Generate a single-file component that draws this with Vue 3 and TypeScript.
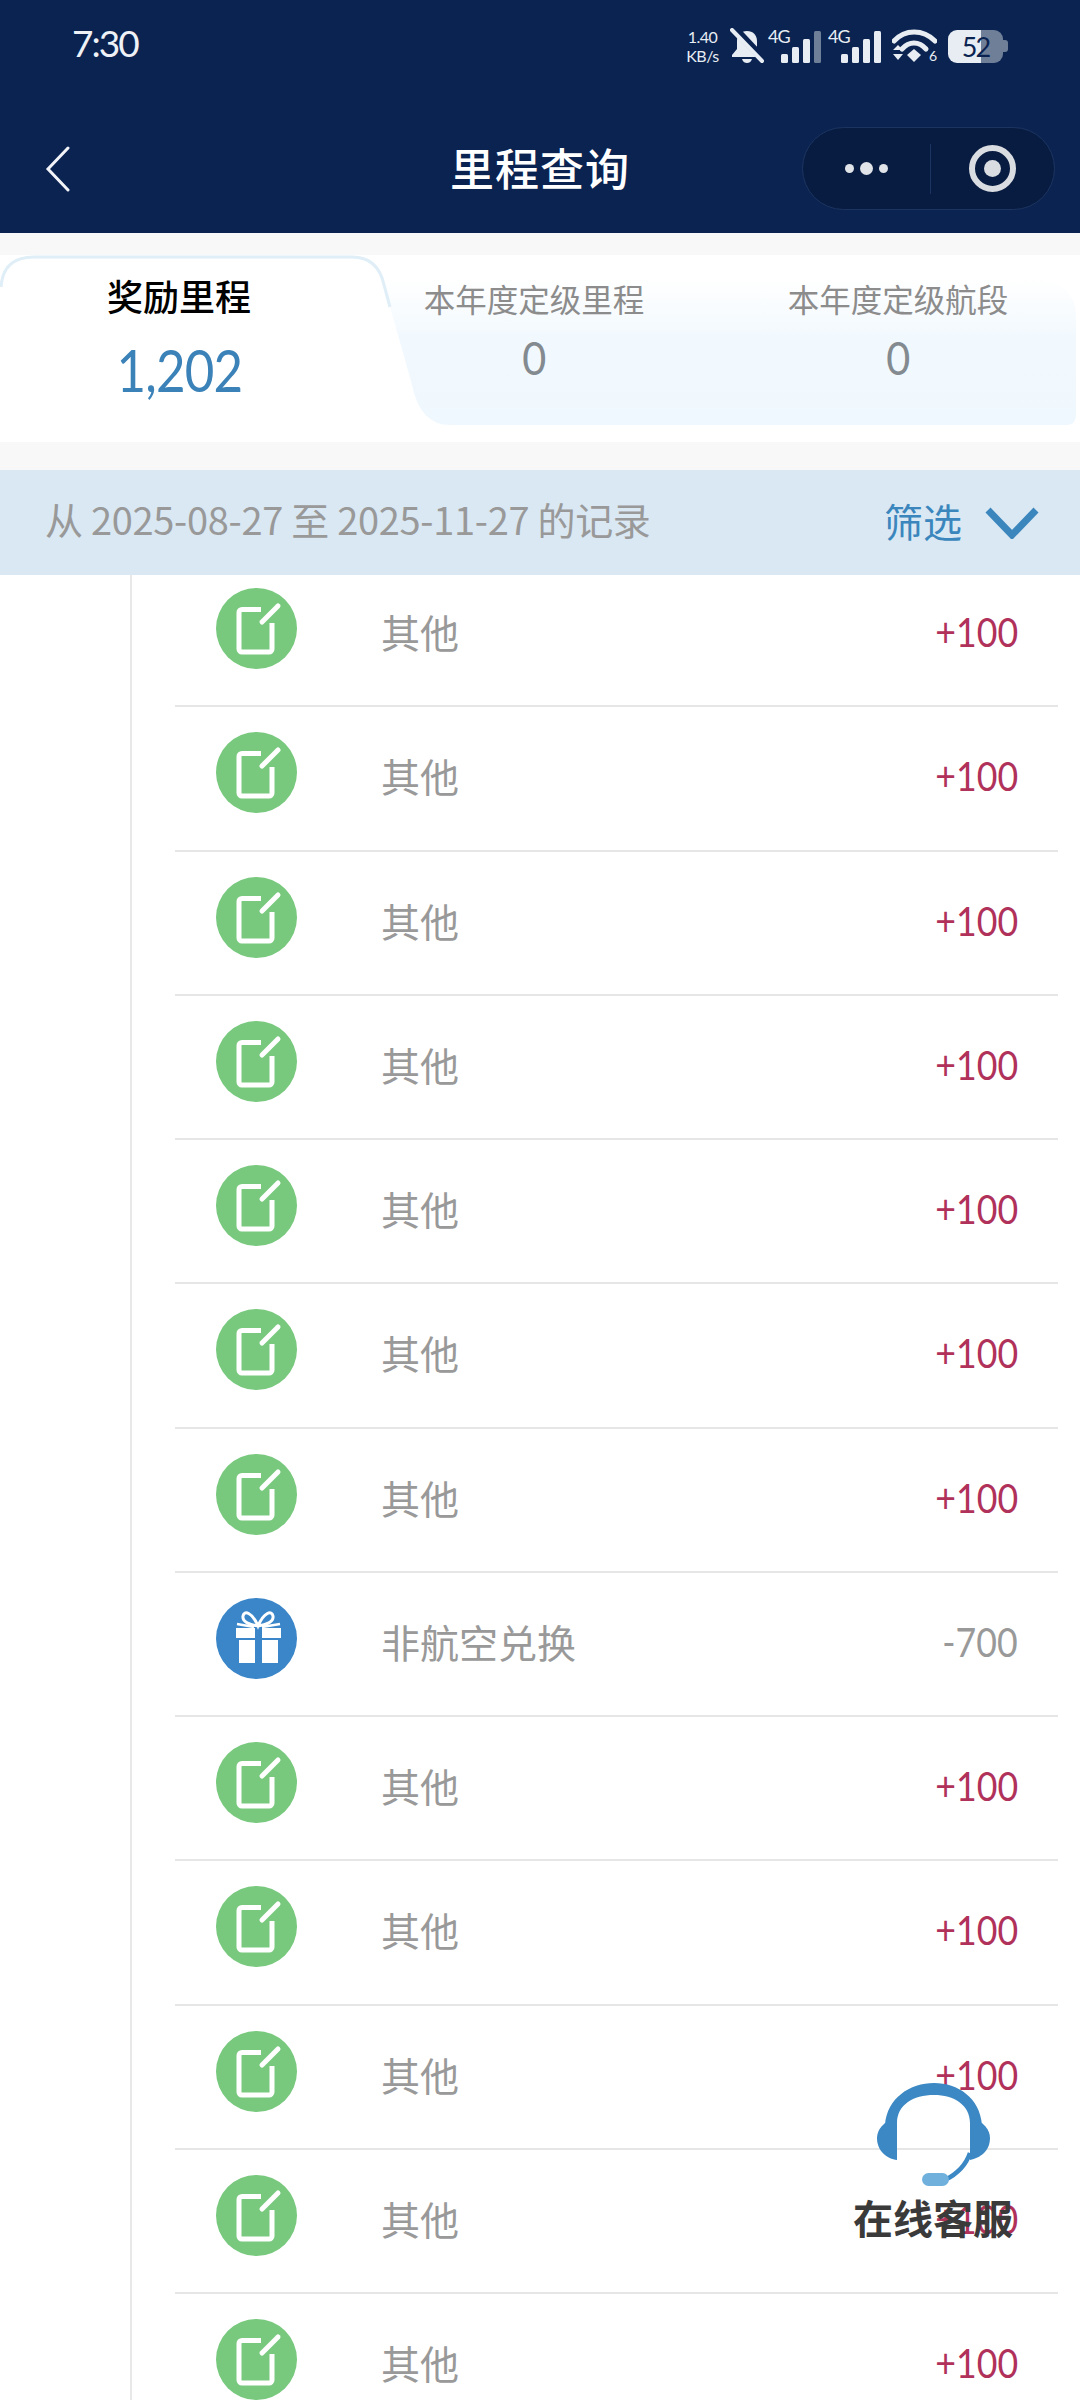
<script setup lang="ts">
interface Row { label: string; amount: string; kind: 'edit' | 'gift' }
const other: Row = { label: '其他', amount: '+100', kind: 'edit' }
const rows: Row[] = [
  other, other, other, other, other, other, other,
  { label: '非航空兑换', amount: '-700', kind: 'gift' },
  other, other, other, other, other,
]
</script>

<template>
  <div class="page">
    <header class="topbar">
      <div class="status">
        <span class="time">7:30</span>
        <div class="status-icons">
          <span class="speed"><span>1.40</span><span>KB/s</span></span>
          <svg class="bell" width="34" height="36" viewBox="0 0 34 36">
            <path d="M17 3c-6 0-10 4-10 10v8l-5 6v2h30v-2l-5-6v-8c0-6-4-10-10-10z" fill="#e8edf4" />
            <path d="M12 31h10c-1 3-3 4-5 4s-4-1-5-4z" fill="#e8edf4" />
            <path d="M4 0 34 32" stroke="#0a2351" stroke-width="8" />
            <path d="M2 2 32 33" stroke="#e8edf4" stroke-width="4" stroke-linecap="round" />
          </svg>
          <div v-for="n in 2" :key="n" class="signal">
            <span class="net">4G</span>
            <svg width="54" height="36" viewBox="0 0 54 36">
              <rect x="13" y="26" width="7" height="9" rx="1.5" fill="#e8edf4" />
              <rect x="24" y="19" width="7" height="16" rx="1.5" fill="#e8edf4" />
              <rect x="35" y="11" width="7" height="24" rx="1.5" fill="#e8edf4" />
              <rect x="46" y="3" width="7" height="32" rx="1.5" :fill="n === 1 ? '#6f7f98' : '#e8edf4'" />
            </svg>
          </div>
          <div class="wifi">
            <svg width="45" height="34" viewBox="0 0 45 34">
              <path d="M2 12C13 0 31 0 43 12" fill="none" stroke="#e8edf4" stroke-width="5" stroke-linecap="round" />
              <path d="M10 20C17 12 27 12 34 20" fill="none" stroke="#e8edf4" stroke-width="5" stroke-linecap="round" />
              <path d="M15 26 22 20 29 26 22 33z" fill="#e8edf4" />
              <path d="M1 21 6 16 11 21zM1 25 6 31 11 25z" fill="#e8edf4" />
            </svg>
            <span class="wifi-six">6</span>
          </div>
          <div class="battery">
            <div class="battery-body"><span class="battery-num">52</span></div>
            <span class="battery-nub"></span>
          </div>
        </div>
      </div>
      <div class="nav">
        <svg class="back" width="26" height="46" viewBox="0 0 26 46">
          <path d="M23 2 3 23 23 44" fill="none" stroke="#f2f4f8" stroke-width="3" stroke-linecap="round" />
        </svg>
        <h1 class="title">里程查询</h1>
        <div class="capsule">
          <div class="capsule-dots"><i></i><i class="big"></i><i></i></div>
          <span class="capsule-line"></span>
          <div class="capsule-target"><span></span></div>
        </div>
      </div>
    </header>

    <section class="tabs">
      <svg class="tabs-bg" width="1080" height="187" viewBox="0 0 1080 187">
        <defs>
          <linearGradient id="panelFill" x1="0" y1="0" x2="0" y2="1">
            <stop offset="0" stop-color="#ffffff" />
            <stop offset="0.4" stop-color="#f2f9fe" />
            <stop offset="1" stop-color="#eff8fe" />
          </linearGradient>
        </defs>
        <path d="M382 23H1040Q1076 30 1076 62V160Q1076 170 1066 170H450Q420 170 412 130Z" fill="url(#panelFill)" />
        <path d="M1 32Q3 2 34 2H352Q378 2 384 30L390 52" fill="none" stroke="#dfeef7" stroke-width="3" />
      </svg>
      <div class="tab">
        <div class="tab-label strong">奖励里程</div>
        <div class="tab-value big">1,202</div>
      </div>
      <div class="tab">
        <div class="tab-label">本年度定级里程</div>
        <div class="tab-value">0</div>
      </div>
      <div class="tab last">
        <div class="tab-label">本年度定级航段</div>
        <div class="tab-value">0</div>
      </div>
    </section>

    <section class="filter">
      <span class="range">从 2025-08-27 至 2025-11-27 的记录</span>
      <div class="filter-btn">
        <span>筛选</span>
        <svg width="54" height="32" viewBox="0 0 54 32">
          <path d="M3 3 27 28 51 3" fill="none" stroke="#3a86bd" stroke-width="7" />
        </svg>
      </div>
    </section>

    <main class="list">
      <div class="rows">
        <div v-for="(row, i) in rows" :key="i" class="row">
          <div class="badge" :class="row.kind">
            <svg v-if="row.kind === 'edit'" width="81" height="81" viewBox="0 0 81 81">
              <path d="M45 21.500H26a3 3 0 0 0-3 3V61a3 3 0 0 0 3 3H53a3 3 0 0 0 3-3V35" fill="none" stroke="#fff" stroke-width="5" />
              <path d="M46 34 62 18" fill="none" stroke="#fff" stroke-width="5" stroke-linecap="round" />
            </svg>
            <svg v-else width="81" height="81" viewBox="0 0 81 81">
              <path d="M20 30H39V40H20zM46 30H65V40H46zM23 42H39V65H23zM46 42H62V65H46z" fill="#fff" />
              <path d="M42 28C36 14 28 12 27 18 26 24 34 27 42 28 50 27 58 24 57 18 56 12 48 14 42 28Z" fill="none" stroke="#fff" stroke-width="3" />
              <path d="M21 26 38 29M64 26 46 29" fill="none" stroke="#fff" stroke-width="2.500" />
            </svg>
          </div>
          <span class="row-label">{{ row.label }}</span>
          <span class="row-amount" :class="{ minus: row.amount.startsWith('-') }">{{ row.amount }}</span>
        </div>
      </div>
    </main>

    <aside class="service">
      <svg width="113" height="105" viewBox="0 0 113 105">
        <path d="M8 42C10 15 33 0 57 0 81 0 103 15 105 42H93V40C93 22 77 12 57 12 36 12 20 22 20 40V42Z" fill="#3b88c4" />
        <path d="M20 35C6 38 0 47 0 55 0 68 10 76 20 77Z" fill="#3b88c4" />
        <path d="M93 35C107 38 113 47 113 55 113 68 103 75 93 77Z" fill="#3b88c4" />
        <path d="M93 70C88 85 78 92 68 97" fill="none" stroke="#3b88c4" stroke-width="4.500" />
        <rect x="45" y="90" width="27" height="13" rx="6.500" fill="#6fb1dc" />
      </svg>
      <span>在线客服</span>
    </aside>
  </div>
</template>

<style scoped>
.page {
  position: relative;
  width: 1080px;
  height: 2400px;
  overflow: hidden;
  display: flex;
  flex-direction: column;
  background: #fff;
  font-family: "Noto Sans CJK SC", "Noto Sans", sans-serif;
}
.topbar { background: #0a2351; height: 233px; flex: none; }
.status {
  height: 92px;
  display: flex;
  align-items: center;
  justify-content: space-between;
  padding: 0 72px;
}
.time {
  font-family: "Lato", sans-serif;
  font-weight: 400;
  font-size: 37px;
  line-height: 44px;
  margin-bottom: 6px;
  letter-spacing: -2px;
  color: #eef1f6;
}
.status-icons { display: flex; align-items: center; }
.speed {
  display: flex;
  flex-direction: column;
  align-items: center;
  width: 37px;
  font-family: "Lato", sans-serif;
  font-size: 16px;
  line-height: 19px;
  letter-spacing: -0.500px;
  color: #e8edf4;
}
.bell { margin-left: 9px; margin-right: 4px; }
.signal { position: relative; width: 54px; height: 36px; margin-right: 6px; }
.signal svg { display: block; }
.net {
  position: absolute;
  left: 0;
  top: -2px;
  font-family: "Lato", sans-serif;
  font-size: 18px;
  line-height: 20px;
  letter-spacing: -1px;
  color: #e8edf4;
}
.wifi { position: relative; width: 45px; height: 34px; margin-left: 4px; margin-right: 11px; }
.wifi svg { display: block; }
.wifi-six {
  position: absolute;
  right: 0;
  bottom: 0;
  font-family: "Lato", sans-serif;
  font-size: 14px;
  line-height: 14px;
  color: #e8edf4;
}
.battery { display: flex; align-items: center; }
.battery-body {
  width: 55px;
  height: 33px;
  border-radius: 9px;
  background: linear-gradient(90deg, #e8edf4 33px, #6f7f98 33px);
  display: flex;
  align-items: center;
  justify-content: center;
}
.battery-num {
  font-family: "Lato", sans-serif;
  font-size: 27px;
  line-height: 33px;
  letter-spacing: -2px;
  color: #0a2351;
}
.battery-nub { width: 5px; height: 12px; background: #6f7f98; border-radius: 0 3px 3px 0; }
.nav {
  height: 141px;
  padding: 12px 25px 0;
  box-sizing: border-box;
  display: grid;
  grid-template-columns: 1fr auto 1fr;
  align-items: center;
}
.back { margin-left: 20px; }
.title {
  margin: 0 0 2px;
  font-size: 44px;
  line-height: 1.2;
  font-weight: 500;
  letter-spacing: 1px;
  color: #fff;
}
.capsule {
  justify-self: end;
  width: 253px;
  height: 83px;
  box-sizing: border-box;
  border-radius: 42px;
  background: #081c41;
  border: 1px solid #1c3560;
  display: flex;
  align-items: center;
}
.capsule-dots { width: 127px; display: flex; justify-content: center; align-items: center; gap: 6px; }
.capsule-dots i { width: 9px; height: 9px; border-radius: 50%; background: #e0e3e8; }
.capsule-dots i.big { width: 13px; height: 13px; }
.capsule-line { width: 1px; height: 50px; background: #1c3560; }
.capsule-target { flex: 1; display: flex; justify-content: center; }
.capsule-target span {
  width: 47px;
  height: 47px;
  box-sizing: border-box;
  border-radius: 50%;
  border: 6px solid #d9dce1;
  display: flex;
  align-items: center;
  justify-content: center;
}
.capsule-target span::after {
  content: "";
  width: 17px;
  height: 17px;
  border-radius: 50%;
  background: #d9dce1;
}

.tabs {
  position: relative;
  margin-top: 22px;
  height: 187px;
  flex: none;
  display: grid;
  grid-template-columns: 358px 352px 370px;
  background: #fff;
  box-shadow: 0 -22px 0 #f8f8f8, 0 28px 0 #f8f8f8;
}
.tabs-bg { position: absolute; left: 0; top: 0; }
.tab {
  position: relative;
  display: flex;
  flex-direction: column;
  align-items: center;
  padding-top: 21px;
}
.tab.last { padding-left: 6px; }
.tab-label {
  font-size: 31.500px;
  line-height: 44px;
  color: #8c8c8c;
  font-weight: 400;
}
.tab-label.strong {
  font-size: 36px;
  color: #000;
  font-weight: 500;
  margin-top: -3px;
}
.tab-value {
  font-family: "Lato", sans-serif;
  font-size: 46px;
  font-weight: 400;
  line-height: 56px;
  margin-top: 10px;
  color: #838a90;
  transform: scaleX(0.9);
}
.tab-value.big {
  font-size: 58px;
  line-height: 70px;
  margin-top: 18px;
  letter-spacing: -1px;
  color: #3b82b8;
  transform: scaleX(0.88);
}

.filter {
  margin-top: 28px;
  height: 105px;
  flex: none;
  position: relative;
  background: #d9e8f3;
  display: flex;
  align-items: center;
  justify-content: space-between;
  padding: 0 41px 0 45px;
}
.range {
  font-size: 38px;
  line-height: 50px;
  margin-bottom: 8px;
  font-weight: 400;
  letter-spacing: -0.300px;
  color: #999;
}
.filter-btn {
  display: flex;
  align-items: center;
  gap: 23px;
  font-size: 39px;
  font-weight: 400;
  color: #3a86bd;
}
.filter-btn span { line-height: 50px; margin-bottom: 6px; }

.list {
  flex: 1;
  min-height: 0;
  overflow: hidden;
  padding-left: 175px;
  padding-right: 22px;
  position: relative;
}
.list::before {
  content: "";
  position: absolute;
  left: 130px;
  top: 0;
  bottom: 0;
  width: 2px;
  background: #e8e8e8;
}
.rows { margin-top: -12px; }
.row {
  height: 144.250px;
  box-sizing: border-box;
  border-bottom: 2px solid #e6e6e6;
  display: flex;
  align-items: center;
  position: relative;
  padding: 0 40px 0 206px;
  justify-content: space-between;
}
.badge {
  position: absolute;
  left: 41px;
  top: 25px;
  width: 81px;
  height: 81px;
  border-radius: 50%;
}
.badge svg { display: block; }
.badge.edit { background: #78c97e; }
.badge.gift { background: #3a86c8; }
.row-label {
  font-size: 39px;
  line-height: 50px;
  margin-bottom: 6px;
  font-weight: 400;
  color: #999;
}
.row-amount {
  display: inline-block;
  font-family: "Lato", sans-serif;
  font-size: 41px;
  line-height: 50px;
  margin-bottom: 4px;
  font-weight: 400;
  color: #b0315a;
  transform: scaleX(0.87);
  transform-origin: right center;
}
.row-amount.minus { color: #999; }

.service {
  position: absolute;
  left: 840px;
  top: 2083px;
  width: 186px;
  display: flex;
  flex-direction: column;
  align-items: center;
  font-size: 40px;
  line-height: 58px;
  font-weight: 700;
  color: #3a3a3a;
}
.service svg { display: block; }
</style>
